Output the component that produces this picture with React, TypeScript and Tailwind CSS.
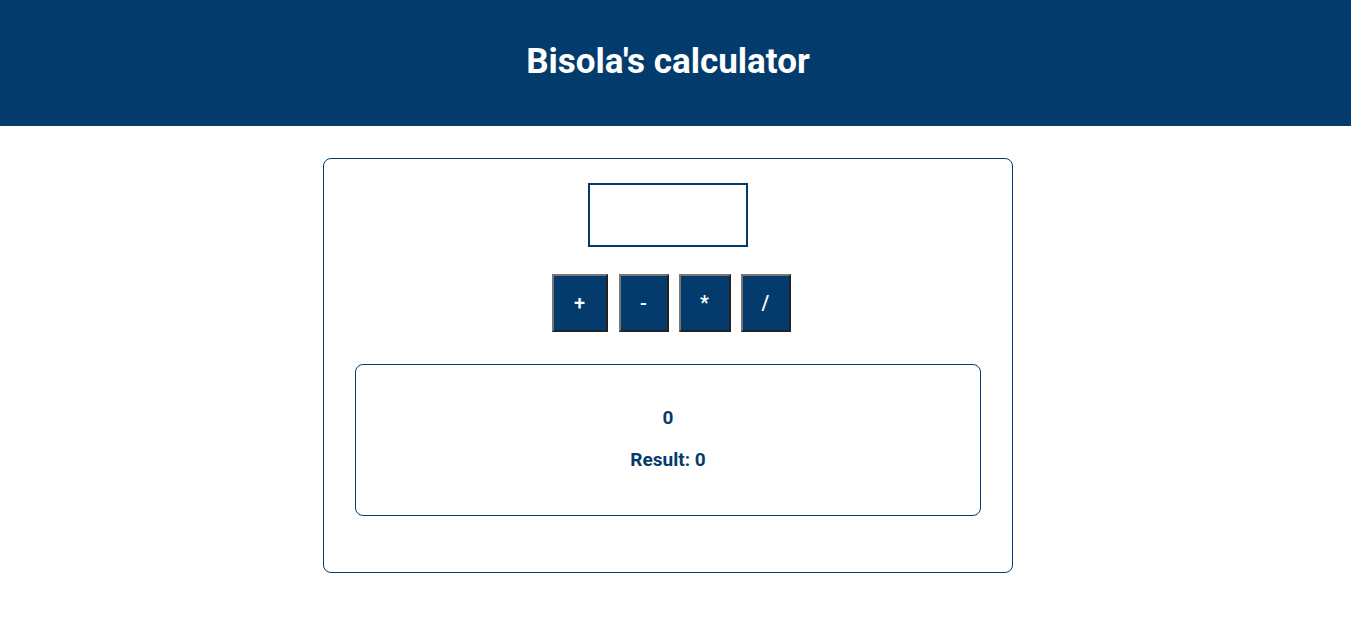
import React from "react";

export default function App() {
  const btn =
    "h-[58px] bg-[#033c6c] text-white text-[20px] font-medium border-2 border-t-[#767676] border-l-[#767676] border-r-[#222] border-b-[#222] flex items-center justify-center";
  return (
    <div className="min-h-[626px] bg-white" style={{ fontFamily: "Roboto, 'Liberation Sans', sans-serif" }}>
      <header className="h-[126px] bg-[#033c6c]">
        <div className="w-[1336px] h-full flex items-center justify-center">
          <h1 className="text-white text-[35px] font-bold leading-none -mt-[3px]">Bisola's calculator</h1>
        </div>
      </header>
      <div className="w-[1336px] flex justify-center pt-[32px]">
        <div className="w-[690px] h-[415px] border border-[#033c6c] rounded-[8px] px-[31px] pt-[24px] flex flex-col items-center">
          <div className="w-[160px] h-[64px] border-2 border-[#033c6c]" />
          <div className="flex mt-[27px] ml-[6px] gap-[10px]">
            <button className={`${btn} w-[56px] mr-[1px]`}>+</button>
            <button className={`${btn} w-[50px]`}>-</button>
            <button className={`${btn} w-[52px]`}>*</button>
            <button className={`${btn} w-[50px]`}>/</button>
          </div>
          <div className="mt-[32px] w-full h-[152px] pb-[4px] border border-[#033c6c] rounded-[8px] flex flex-col items-center justify-center text-[#033c6c] text-[19px] font-bold">
            <div className="leading-none">0</div>
            <div className="leading-none mt-[23px]">Result: 0</div>
          </div>
        </div>
      </div>
    </div>
  );
}
